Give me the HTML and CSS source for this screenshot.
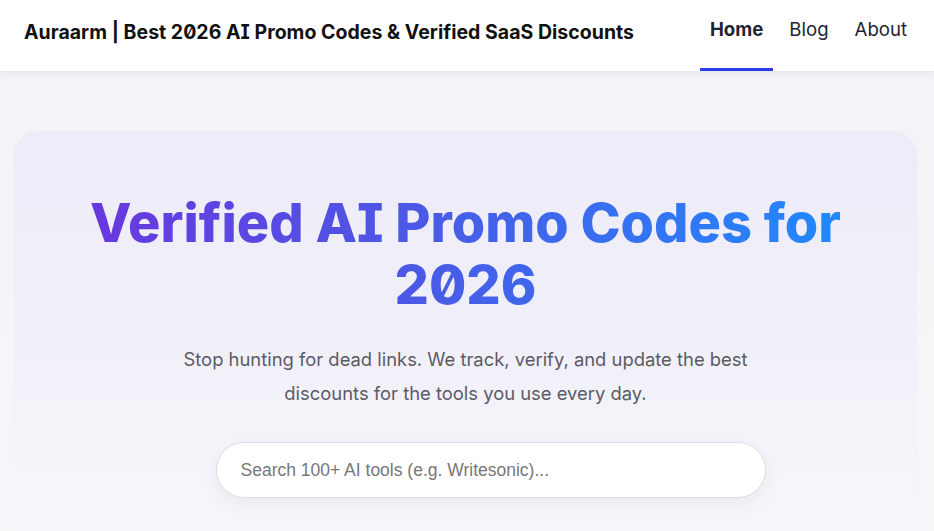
FILE: index.html
```html
<!DOCTYPE html>
<html lang="en">
<head>
<meta charset="utf-8">
<title>Auraarm</title>
<link rel="stylesheet" href="styles.css">
</head>
<body>
<header class="site-header">
  <div class="brand">Auraarm | Best 2026 AI Promo Codes &amp; Verified SaaS Discounts</div>
  <nav class="nav">
    <a class="nav-link active" href="#">Home</a>
    <a class="nav-link" href="#">Blog</a>
    <a class="nav-link" href="#">About</a>
  </nav>
</header>
<main class="main">
  <section class="hero">
    <h1 class="hero-title">Verified AI Promo Codes for 2026</h1>
    <p class="hero-sub">Stop hunting for dead links. We track, verify, and update the best discounts for the tools you use every day.</p>
    <div class="search-wrap">
      <input class="search" type="text" placeholder="Search 100+ AI tools (e.g. Writesonic)...">
    </div>
  </section>
</main>
</body>
</html>
```
FILE: styles.css
```css
* { box-sizing: border-box; }
html, body { margin: 0; padding: 0; }
body {
  background: #f5f5f8;
  font-family: Inter, "Noto Sans", sans-serif;
  color: #1a1a2e;
  height: 531px;
  overflow: hidden;
}
.site-header {
  height: 71px;
  background: #ffffff;
  display: flex;
  align-items: stretch;
  justify-content: space-between;
  padding: 0 17px 0 24px;
  box-shadow: 0 2px 6px rgba(20, 20, 60, 0.06);
  position: relative;
  z-index: 1;
}
.brand {
  display: flex;
  align-items: center;
  font-size: 19.5px;
  font-weight: 700;
  letter-spacing: 0.02px;
  color: #111;
  font-feature-settings: "zero", "cv08";
  padding-bottom: 8px;
}
.nav {
  display: flex;
  gap: 6px;
}
.nav-link {
  display: flex;
  align-items: center;
  padding: 0 10px 10px;
  font-size: 18.6px;
  color: #1f2433;
  text-decoration: none;
  border-bottom: 3px solid transparent;
}
.nav-link.active {
  font-weight: 700;
  border-bottom-color: #2a3bea;
}
.main {
  padding: 60px 17px 0 14px;
  background: linear-gradient(#f3f3f7, #f7f7f9);
  height: 460px;
}
.hero {
  background: linear-gradient(180deg, #edebf8 0%, #f1f0f9 50%, #f7f7fa 100%);
  border-radius: 24px;
  padding: 61px 30px 60px;
  text-align: center;
  height: 420px;
}
.hero-title {
  margin: 0 auto;
  max-width: 800px;
  font-size: 54px;
  line-height: 62px;
  font-weight: 800;
  letter-spacing: 0;
  font-feature-settings: "zero", "cv08";
  background: linear-gradient(90deg, #6b35de 0%, #4a5ae6 45%, #1e8cff 100%);
  -webkit-background-clip: text;
  background-clip: text;
  color: transparent;
}
.hero-sub {
  margin: 26px auto 0;
  max-width: 620px;
  font-size: 18.4px;
  line-height: 34px;
  color: #5b5b66;
}
.search-wrap {
  display: flex;
  justify-content: center;
  margin-top: 32px;
  padding-left: 50px;
}
.search {
  width: 550px;
  height: 56px;
  flex: none;
  border: 1px solid #dcdce2;
  border-radius: 28px;
  background: #fff;
  padding: 0 24px;
  font-family: "Liberation Sans", Arial, sans-serif;
  font-size: 17.5px;
  color: #333;
  box-shadow: 0 6px 18px rgba(40, 40, 80, 0.06);
  outline: none;
}
.search::placeholder { color: #777; }
```
